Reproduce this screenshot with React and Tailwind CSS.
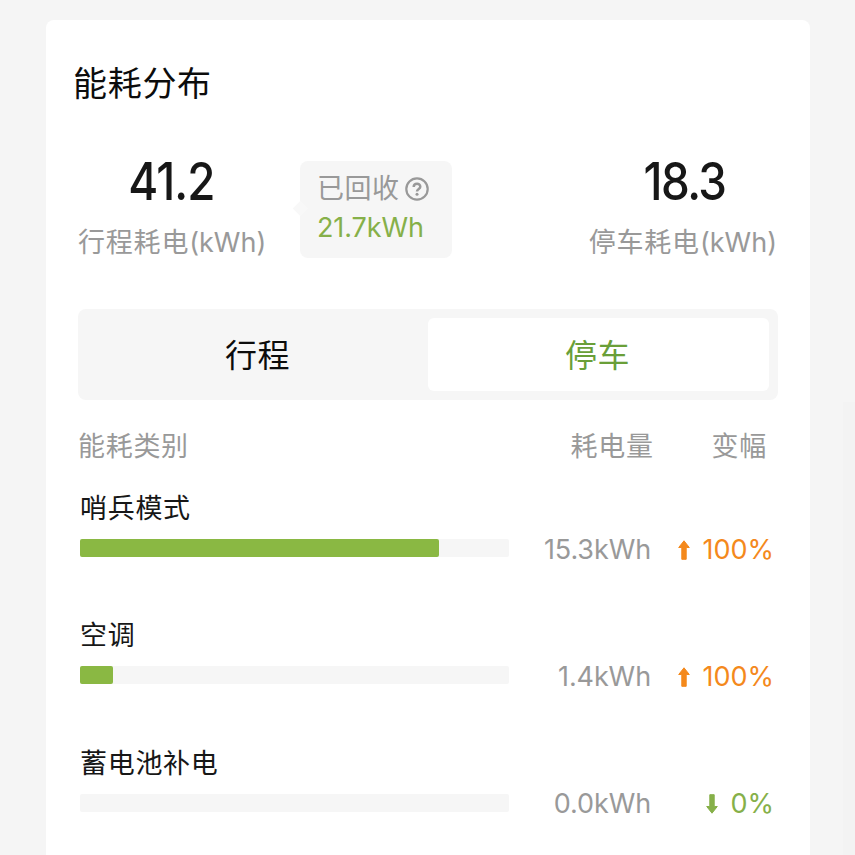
import React from 'react';

const ROWS = [
    { name: '哨兵模式', usage: '15.3kWh', percent: 83.6, change: '100%', up: true },
    { name: '空调', usage: '1.4kWh', percent: 7.7, change: '100%', up: true },
    { name: '蓄电池补电', usage: '0.0kWh', percent: 0, change: '0%', up: false },
];

function Arrow({ up }) {
    return (
        <svg
            width="12"
            height="20"
            viewBox="0 0 12 20"
            fill="currentColor"
            stroke="currentColor"
            strokeWidth="1"
            strokeLinejoin="round"
            className={up ? 'shrink-0' : 'shrink-0 rotate-180'}
        >
            <path d="M6 0.8 L11.3 7.5 H8.2 V19.3 H3.8 V7.5 H0.7 Z" />
        </svg>
    );
}

function HelpIcon() {
    return (
        <svg width="24" height="24" viewBox="0 0 24 24" fill="none" stroke="#999999" className="shrink-0">
            <circle cx="12" cy="12" r="10.7" strokeWidth="2.2" />
            <path d="M8.7 9.9 C8.7 5.7 15.3 5.7 15.3 9.7 C15.3 12 12 11.9 12 14.6" strokeWidth="2.5" />
            <circle cx="12" cy="17.3" r="1.5" fill="#999999" stroke="none" />
        </svg>
    );
}

function Stat({ value, label, valueClass }) {
    return (
        <div className="flex flex-col">
            <span
                className={`h-[60px] origin-left scale-x-[0.88] text-[52px] leading-[60px] font-medium text-[#171717] ${valueClass}`}
            >
                {value}
            </span>
            <span className="mt-[13px] h-9 text-[27px] leading-9 text-[#999999]">
                <span className="tracking-[0.8px]">{label}</span>
                <span>(kWh)</span>
            </span>
        </div>
    );
}

function UsageRow({ row }) {
    return (
        <div className="h-[127.4px]">
            <div className="h-9 text-[27px] leading-9 tracking-[0.7px] text-[#171717]">{row.name}</div>
            <div className="mt-[3px] flex h-9 items-center text-[27px] leading-9">
                <div className="h-[18px] w-[429px] rounded-[2px] bg-[#f6f6f6]">
                    <div className="h-full rounded-[2px] bg-[#8ab843]" style={{ width: `${row.percent}%` }} />
                </div>
                <span className="w-[142px] pt-[3px] text-right tracking-[-0.1px] text-[#999999]">{row.usage}</span>
                <div className={`flex flex-1 items-center justify-end gap-3 pt-[3px] ${row.up ? 'text-[#f4891c]' : 'text-[#86b049]'}`}>
                    <Arrow up={row.up} />
                    <span>{row.change}</span>
                </div>
            </div>
        </div>
    );
}

export default function App() {
    return (
        <div className="relative h-[855px] w-[855px] overflow-hidden bg-[#f5f5f5] pt-5 pl-[46px] font-['Inter','Noto_Sans_CJK_SC',sans-serif]">
            <div className="h-[860px] w-[764px] rounded-lg bg-white pt-[39px]">
                <h1 className="ml-[27px] h-[50px] text-[34px] leading-[50px] font-normal tracking-[0.7px] text-[#0c0c0c]">能耗分布</h1>

                {/* Totals */}
                <div className="mt-[43px] flex h-[110px] items-start pr-[33px] pl-8">
                    <div className="w-[222px]">
                        <Stat value="41.2" label="行程耗电" valueClass="pl-[57px] tracking-[-1px]" />
                    </div>
                    <div className="relative mt-[9px] h-[97px] w-[152px] rounded-lg bg-[#f6f6f6] pt-[9px] pl-[17px] text-[27px]">
                        <span className="absolute top-[42px] left-[-5px] size-[11px] rotate-45 bg-[#f8f8f8]" />
                        <div className="flex h-[38px] items-center gap-[5px] leading-[38px] tracking-[0.5px] text-[#999999]">
                            已回收
                            <HelpIcon />
                        </div>
                        <div className="h-[38px] pt-px leading-[38px] tracking-[-0.1px] text-[#86b049]">21.7kWh</div>
                    </div>
                    <div className="ml-auto">
                        <Stat value="18.3" label="停车耗电" valueClass="pl-[62px] tracking-[-1.8px]" />
                    </div>
                </div>

                {/* Tabs */}
                <div className="mt-[47px] ml-8 flex h-[91px] w-[700px] rounded-lg bg-[#f6f6f6] p-[9px] text-[32px] tracking-[0.5px]">
                    <button className="flex-1 pt-0.5 text-[#0c0c0c]">行程</button>
                    <button className="w-[341px] rounded-md bg-white pt-0.5 pr-0.5 text-[#6a9f38]">停车</button>
                </div>

                {/* Table header */}
                <div className="mt-[29px] mr-[43px] ml-8 flex h-9 text-[27px] leading-9 tracking-[0.7px] text-[#999999]">
                    <span className="flex-1">能耗类别</span>
                    <span>耗电量</span>
                    <span className="ml-[58px]">变幅</span>
                </div>

                <div className="mt-[26px] mr-9 ml-[34px]">
                    {ROWS.map(row => (
                        <UsageRow key={row.name} row={row} />
                    ))}
                </div>
            </div>
            <div className="absolute top-[402px] right-0 h-[453px] w-3 bg-[#f3f3f3]" />
        </div>
    );
}
